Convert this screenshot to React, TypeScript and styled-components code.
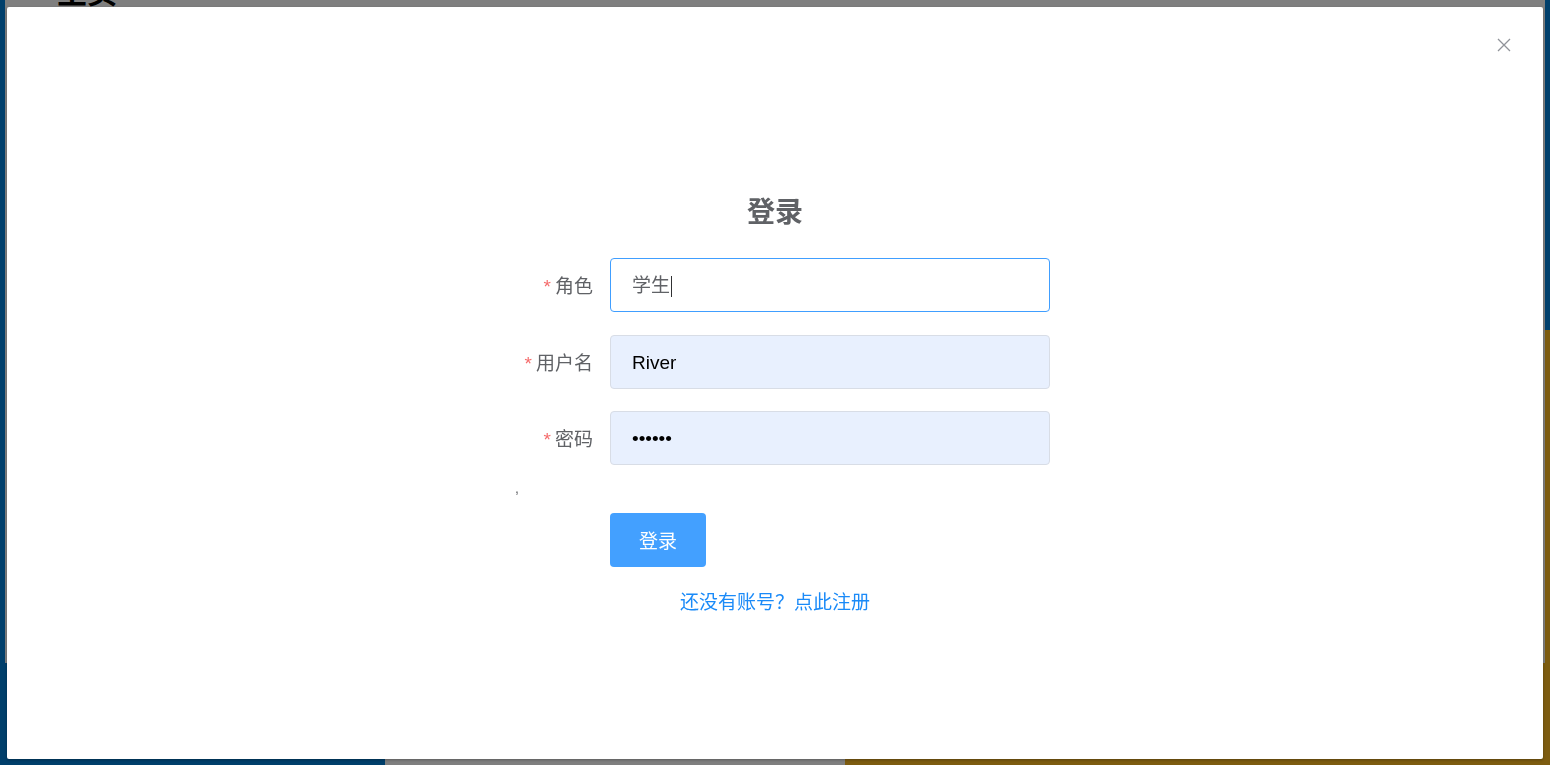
import styled, { createGlobalStyle } from 'styled-components';

const GlobalStyle = createGlobalStyle`
  html, body {
    margin: 0;
    height: 100%;
    overflow: hidden;
  }
  body {
    font-family: "Liberation Sans", "Noto Sans CJK SC", sans-serif;
  }
`;

const Page = styled.div`
  display: flow-root;
  height: 100vh;
  background:
    linear-gradient(#ffffff, #ffffff) 385px 100% / 460px 20px no-repeat,
    linear-gradient(#fab820, #fab820) 100% 100% / calc(100% - 845px) 435px no-repeat,
    #007ed6;
`;

const HomeCard = styled.div`
  margin: -23px 5px 0;
  height: 686px;
  background: #ffffff;
`;

const HomeTitle = styled.h1`
  margin: 0;
  padding-left: 52px;
  font-size: 30px;
  line-height: 32px;
  font-weight: 700;
  color: #000000;
`;

const Overlay = styled.div`
  position: fixed;
  inset: 0;
  background: rgba(0, 0, 0, 0.5);
  display: flex;
  align-items: center;
  justify-content: center;
`;

const Dialog = styled.div`
  width: 1536px;
  height: 752px;
  background: #ffffff;
  border-radius: 2px;
  box-shadow: 0 1px 3px rgba(0, 0, 0, 0.3);
  display: flex;
  flex-direction: column;
`;

const DialogHeader = styled.div`
  display: flex;
  justify-content: flex-end;
  padding: 30px 31px 0;
`;

const CloseButton = styled.button`
  width: 16px;
  height: 16px;
  padding: 0;
  border: none;
  background: none;
  cursor: pointer;
  display: flex;
`;

const DialogBody = styled.div`
  display: flex;
  flex-direction: column;
  align-items: center;
`;

const Title = styled.h2`
  margin: 140px 0 25.5px;
  font-size: 28px;
  line-height: 40px;
  font-weight: 700;
  color: #606266;
`;

const Form = styled.form`
  width: 540px;
  padding-left: 10px;
`;

const FormItem = styled.div`
  display: flex;
  height: 54px;
  margin-bottom: 22.5px;
`;

const Label = styled.label`
  width: 100px;
  box-sizing: border-box;
  padding: 2px 17px 0 0;
  text-align: right;
  font-size: 19px;
  line-height: 54px;
  color: #606266;
`;

const Required = styled.span`
  color: #f56c6c;
  margin-right: 4px;
`;

interface FieldProps {
  $focused?: boolean;
  $autofill?: boolean;
}

const Field = styled.div<FieldProps>`
  flex: 1;
  box-sizing: border-box;
  height: 54px;
  padding: 2px 21px 0;
  border: 1px solid ${({ $focused }) => ($focused ? '#409eff' : '#d8dde6')};
  border-radius: 4px;
  background: ${({ $autofill }) => ($autofill ? '#e8f0fe' : '#ffffff')};
  color: ${({ $autofill }) => ($autofill ? '#000000' : '#606266')};
  font-size: 19px;
  line-height: 50px;
  display: flex;
  align-items: center;
`;

const Caret = styled.span`
  display: inline-block;
  width: 1px;
  height: 21px;
  margin-left: 1px;
  background: #303133;
`;

const Stray = styled.div`
  height: 25px;
  padding-left: 5px;
  font-size: 14px;
  line-height: 0;
  color: #606266;
`;

const SubmitRow = styled.div`
  padding-left: 100px;
  margin-bottom: 22px;
`;

const SubmitButton = styled.button`
  width: 96px;
  height: 54px;
  border: none;
  border-radius: 4px;
  background: #43a0ff;
  color: #ffffff;
  font-family: inherit;
  font-size: 19px;
  cursor: pointer;
`;

const RegisterLink = styled.a`
  font-size: 19px;
  line-height: 28px;
  color: #1a8af8;
  text-decoration: none;
  cursor: pointer;
`;

function CloseIcon() {
  return (
    <svg width="16" height="16" viewBox="0 0 16 16" fill="none">
      <path d="M2 2L14 14M14 2L2 14" stroke="#909399" strokeWidth="1.3" />
    </svg>
  );
}

export default function App() {
  return (
    <>
      <GlobalStyle />
      <Page>
        <HomeCard>
          <HomeTitle>主页</HomeTitle>
        </HomeCard>
      </Page>
      <Overlay>
        <Dialog>
          <DialogHeader>
            <CloseButton aria-label="关闭">
              <CloseIcon />
            </CloseButton>
          </DialogHeader>
          <DialogBody>
            <Title>登录</Title>
            <Form onSubmit={(e) => e.preventDefault()}>
              <FormItem>
                <Label>
                  <Required>*</Required>角色
                </Label>
                <Field $focused>
                  学生
                  <Caret />
                </Field>
              </FormItem>
              <FormItem>
                <Label>
                  <Required>*</Required>用户名
                </Label>
                <Field $autofill>River</Field>
              </FormItem>
              <FormItem>
                <Label>
                  <Required>*</Required>密码
                </Label>
                <Field $autofill>••••••</Field>
              </FormItem>
              <Stray>,</Stray>
              <SubmitRow>
                <SubmitButton type="submit">登录</SubmitButton>
              </SubmitRow>
            </Form>
            <RegisterLink>还没有账号？点此注册</RegisterLink>
          </DialogBody>
        </Dialog>
      </Overlay>
    </>
  );
}
